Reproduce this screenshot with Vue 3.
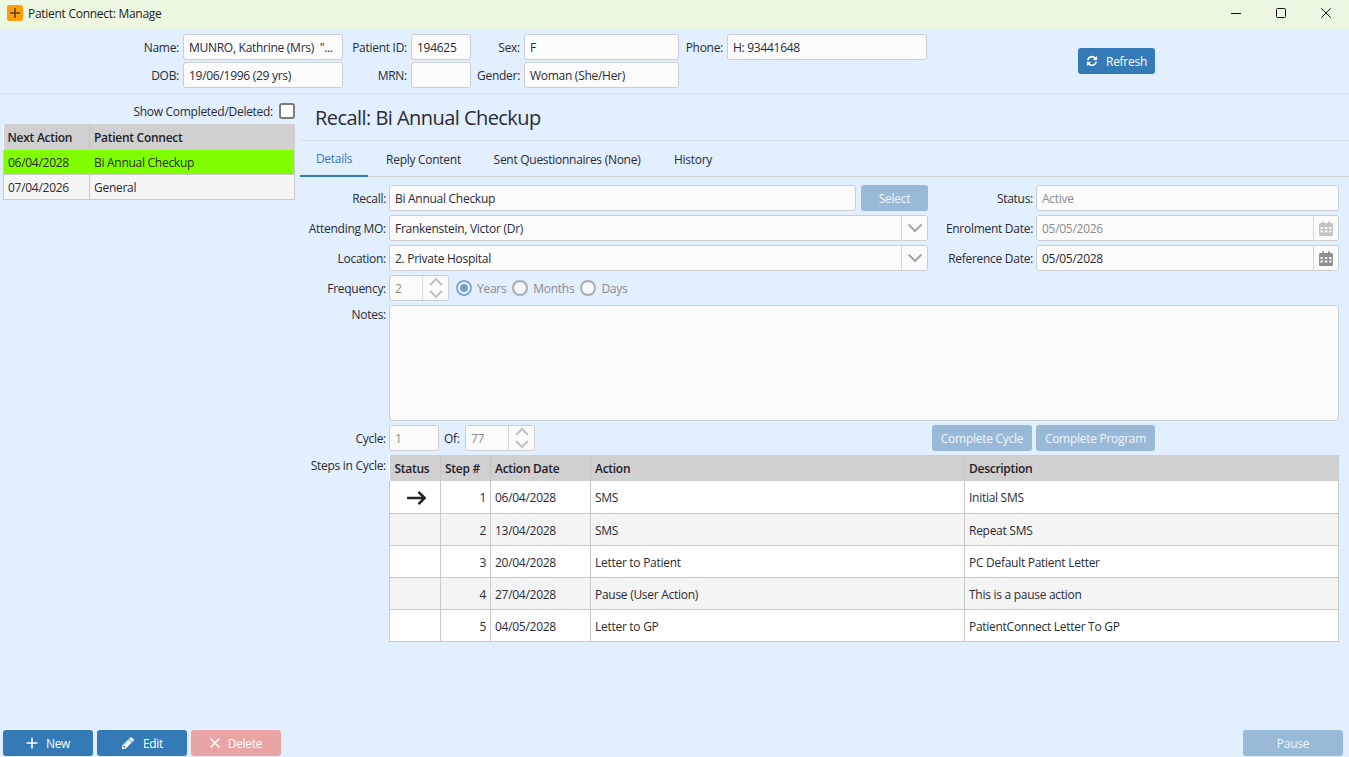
<script setup>
const recalls = [
  { date: '06/04/2028', name: 'Bi Annual Checkup', active: true },
  { date: '07/04/2026', name: 'General', active: false }
]

const steps = [
  { step: 1, date: '06/04/2028', action: 'SMS', description: 'Initial SMS', current: true },
  { step: 2, date: '13/04/2028', action: 'SMS', description: 'Repeat SMS' },
  { step: 3, date: '20/04/2028', action: 'Letter to Patient', description: 'PC Default Patient Letter' },
  { step: 4, date: '27/04/2028', action: 'Pause (User Action)', description: 'This is a pause action' },
  { step: 5, date: '04/05/2028', action: 'Letter to GP', description: 'PatientConnect Letter To GP' }
]

const tabs = [
  { label: 'Details', width: 68 },
  { label: 'Reply Content', width: 111 },
  { label: 'Sent Questionnaires (None)', width: 176 },
  { label: 'History', width: 76 }
]
</script>

<template>
  <div class="app">
    <header class="titlebar">
      <svg class="app-icon" width="16" height="16" viewBox="0 0 16 16">
        <rect width="16" height="16" rx="2.5" fill="#ff9d0a" />
        <path d="M8 3v10M3 8h10" stroke="#5a4520" stroke-width="1.6" />
      </svg>
      <span class="app-title">Patient Connect: Manage</span>
      <div class="win-controls">
        <span class="win-btn">
          <svg width="10" height="10" viewBox="0 0 10 10"><path d="M0 5.5h10" stroke="#111" /></svg>
        </span>
        <span class="win-btn">
          <svg width="10" height="10" viewBox="0 0 10 10"><rect x=".5" y=".5" width="9" height="9" rx="1" fill="none" stroke="#111" /></svg>
        </span>
        <span class="win-btn">
          <svg width="10" height="10" viewBox="0 0 10 10"><path d="M.3.3l9.4 9.4M9.7.3L.3 9.7" stroke="#111" /></svg>
        </span>
      </div>
    </header>

    <section class="patient">
      <label>Name:</label>
      <div class="field">MUNRO, Kathrine (Mrs)&nbsp; "...</div>
      <label>Patient ID:</label>
      <div class="field">194625</div>
      <label>Sex:</label>
      <div class="field">F</div>
      <label>Phone:</label>
      <div class="field">H: 93441648</div>
      <button class="btn refresh">
        <svg width="12" height="12" viewBox="0 0 1792 1792"><path fill="#fff" d="M1639 1056q0 5-1 7-64 268-268 434.5t-478 166.5q-146 0-282.5-55t-243.5-157l-129 129q-19 19-45 19t-45-19-19-45v-448q0-26 19-45t45-19h448q26 0 45 19t19 45-19 45l-137 137q71 66 161 102t187 36q134 0 250-65t186-179q11-17 53-117 8-23 30-23h192q13 0 22.5 9.5t9.5 22.5zm25-800v448q0 26-19 45t-45 19h-448q-26 0-45-19t-19-45 19-45l138-138q-148-137-349-137-134 0-250 65t-186 179q-11 17-53 117-8 23-30 23h-199q-13 0-22.5-9.5t-9.5-22.5v-7q65-268 270-434.5t480-166.5q146 0 284 55.5t245 156.5l130-129q19-19 45-19t45 19 19 45z" /></svg>
        Refresh
      </button>
      <label class="second-row">DOB:</label>
      <div class="field second-row">19/06/1996 (29 yrs)</div>
      <label class="second-row">MRN:</label>
      <div class="field second-row"></div>
      <label class="second-row">Gender:</label>
      <div class="field second-row">Woman (She/Her)</div>
    </section>

    <main class="main">
      <aside class="side">
        <div class="show-row">
          <span>Show Completed/Deleted:</span>
          <span class="checkbox"></span>
        </div>
        <table class="grid recall-list">
          <colgroup><col style="width: 86px" /><col /></colgroup>
          <thead>
            <tr><th>Next Action</th><th>Patient Connect</th></tr>
          </thead>
          <tbody>
            <tr v-for="r in recalls" :key="r.date" :class="{ active: r.active }">
              <td>{{ r.date }}</td>
              <td>{{ r.name }}</td>
            </tr>
          </tbody>
        </table>
      </aside>

      <div class="content">
        <h1 class="heading">Recall: Bi Annual Checkup</h1>
        <nav class="tabs">
          <span
            v-for="(t, i) in tabs"
            :key="t.label"
            class="tab"
            :class="{ selected: i === 0 }"
            :style="{ width: t.width + 'px' }"
          >{{ t.label }}</span>
        </nav>

        <div class="form">
          <label>Recall:</label>
          <div class="recall-row">
            <div class="field grow">Bi Annual Checkup</div>
            <button class="btn off select">Select</button>
          </div>
          <label>Status:</label>
          <div class="field muted">Active</div>

          <label>Attending MO:</label>
          <div class="field addon">
            <span class="grow pad">Frankenstein, Victor (Dr)</span>
            <span class="drop">
              <svg width="16" height="10" viewBox="0 0 16 10"><path d="M1.5 1.5L8 8l6.500-6.500" fill="none" stroke="#a5a5a5" stroke-width="2" /></svg>
            </span>
          </div>
          <label>Enrolment Date:</label>
          <div class="field addon">
            <span class="grow pad muted">05/05/2026</span>
            <span class="cal">
              <svg width="14" height="15" viewBox="0 0 14 15" opacity=".5"><use href="#cal-glyph" /></svg>
            </span>
          </div>

          <label>Location:</label>
          <div class="field addon">
            <span class="grow pad">2. Private Hospital</span>
            <span class="drop">
              <svg width="16" height="10" viewBox="0 0 16 10"><path d="M1.5 1.5L8 8l6.500-6.500" fill="none" stroke="#a5a5a5" stroke-width="2" /></svg>
            </span>
          </div>
          <label>Reference Date:</label>
          <div class="field addon">
            <span class="grow pad">05/05/2028</span>
            <span class="cal">
              <svg width="14" height="15" viewBox="0 0 14 15">
                <g id="cal-glyph" fill="#8f8f8f">
                  <path fill-rule="evenodd" d="M1.500 2H3V.5h2V2h4V.5h2V2h1.500A1.500 1.500 0 0 1 14 3.500V13.500A1.500 1.500 0 0 1 12.500 15h-11A1.500 1.500 0 0 1 0 13.500V3.500A1.500 1.500 0 0 1 1.500 2zM1.500 6v2h2.300V6zm4.300 0v2h2.400V6zm4.400 0v2h2.300V6zM1.500 9.500v2h2.300v-2zm4.300 0v2h2.400v-2zm4.400 0v2h2.300v-2z" />
                </g>
              </svg>
            </span>
          </div>

          <label>Frequency:</label>
          <div class="freq-row">
            <div class="field addon spinner">
              <span class="grow pad muted">2</span>
              <span class="spin">
                <svg width="14" height="22" viewBox="0 0 14 22"><path d="M1 8l6-6 6 6M1 14l6 6 6-6" fill="none" stroke="#c2c2c2" stroke-width="2" /></svg>
              </span>
            </div>
            <span class="radio on"></span><span class="radio-label">Years</span>
            <span class="radio"></span><span class="radio-label">Months</span>
            <span class="radio"></span><span class="radio-label">Days</span>
          </div>
          <span></span><span></span>

          <label class="top notes-label">Notes:</label>
          <div class="field notes"></div>

          <label>Cycle:</label>
          <div class="cycle-row">
            <div class="field muted cycle">1</div>
            <span class="of">Of:</span>
            <div class="field addon of-spinner">
              <span class="grow pad muted">77</span>
              <span class="spin">
                <svg width="14" height="22" viewBox="0 0 14 22"><path d="M1 8l6-6 6 6M1 14l6 6 6-6" fill="none" stroke="#c2c2c2" stroke-width="2" /></svg>
              </span>
            </div>
          </div>
          <div class="cycle-actions">
            <button class="btn off complete-cycle">Complete Cycle</button>
            <button class="btn off complete-program">Complete Program</button>
          </div>

          <label class="top steps-label">Steps in Cycle:</label>
          <table class="grid steps">
            <colgroup>
              <col style="width: 51px" />
              <col style="width: 50px" />
              <col style="width: 100px" />
              <col style="width: 374px" />
              <col />
            </colgroup>
            <thead>
              <tr>
                <th>Status</th><th>Step #</th><th>Action Date</th><th>Action</th><th>Description</th>
              </tr>
            </thead>
            <tbody>
              <tr v-for="s in steps" :key="s.step">
                <td class="status">
                  <svg v-if="s.current" class="arrow" width="19" height="14" viewBox="0 0 19 14"><path d="M0 7h17.500M11.500.9L17.600 7l-6.100 6.100" fill="none" stroke="#26262c" stroke-width="2.600" /></svg>
                </td>
                <td class="num">{{ s.step }}</td>
                <td>{{ s.date }}</td>
                <td>{{ s.action }}</td>
                <td>{{ s.description }}</td>
              </tr>
            </tbody>
          </table>
        </div>
      </div>
    </main>

    <footer class="footer">
      <button class="btn foot">
        <svg width="12" height="12" viewBox="0 0 12 12"><path d="M6 .5v11M.5 6h11" stroke="#fff" stroke-width="1.500" /></svg>
        New
      </button>
      <button class="btn foot">
        <svg width="14" height="14" viewBox="0 0 1792 1792"><path fill="#fff" d="M491 1536l91-91-235-235-91 91v107h128v128h107zm523-928q0-22-22-22-10 0-17 7l-542 542q-7 7-7 17 0 22 22 22 10 0 17-7l542-542q7-7 7-17zm-54-192l416 416-832 832h-416v-416zm683 96q0 53-37 90l-166 166-416-416 166-165q36-38 90-38 53 0 91 38l235 234q37 39 37 91z" /></svg>
        Edit
      </button>
      <button class="btn foot danger">
        <svg width="10" height="10" viewBox="0 0 10 10"><path d="M.5.5l9 9M9.500.5l-9 9" stroke="#fff" stroke-width="1.500" /></svg>
        Delete
      </button>
      <button class="btn off foot pause">Pause</button>
    </footer>
  </div>
</template>

<style scoped>
.app {
  display: flex;
  flex-direction: column;
  height: 100vh;
  background: #e1effe;
  color: #2b2b33;
  font-family: "Open Sans", "Liberation Sans", sans-serif;
  font-size: 12px;
  letter-spacing: -0.28px;
}

.titlebar {
  display: flex;
  align-items: center;
  height: 29px;
  flex: none;
  box-sizing: border-box;
  padding: 0 1px 3px 7px;
  background: #edf8e2;
  color: #1c1c1c;
}

.app-icon {
  margin-right: 5px;
}

.win-controls {
  display: flex;
  margin-left: auto;
}

.win-btn {
  display: flex;
  align-items: center;
  justify-content: center;
  width: 45px;
  height: 26px;
}

.patient {
  display: grid;
  grid-template-columns: 179px 160px 60px 60px 45px 155px 40px 200px 143px 77px;
  grid-template-rows: 26px 26px;
  column-gap: 4px;
  row-gap: 2px;
  align-items: center;
  flex: none;
  height: 65px;
  padding-top: 5px;
  box-sizing: border-box;
  border-bottom: 1px solid #d8e1e9;
}

.second-row {
  grid-row: 2;
}

label {
  text-align: right;
  white-space: nowrap;
}

.top {
  align-self: start;
}

.field {
  display: flex;
  align-items: center;
  height: 26px;
  box-sizing: border-box;
  padding: 0 5px;
  background: #fbfbfb;
  border: 1px solid #cacdd2;
  border-radius: 3px;
  white-space: nowrap;
  overflow: hidden;
}

.muted {
  color: #8b8b8b;
}

.grow {
  flex: 1;
  min-width: 0;
}

.btn {
  display: flex;
  align-items: center;
  justify-content: center;
  height: 26px;
  padding: 0;
  border: none;
  border-radius: 3px;
  background: #337ab7;
  color: #fff;
  font: inherit;
  letter-spacing: inherit;
}

.btn.off {
  background: #98b9d7;
  color: #f2f6fa;
}

.refresh {
  grid-column: 10;
  grid-row: 1 / 3;
  gap: 8px;
  align-self: center;
}

.main {
  display: flex;
  flex: 1;
  min-height: 0;
}

.side {
  flex: none;
  width: 300px;
  padding-top: 9px;
  box-sizing: border-box;
}

.show-row {
  display: flex;
  align-items: center;
  justify-content: flex-end;
  gap: 6px;
  height: 16px;
  padding-right: 5px;
}

.checkbox {
  width: 16px;
  height: 16px;
  box-sizing: border-box;
  background: #fff;
  border: 2px solid #7c7c7c;
  border-radius: 3px;
}

.grid {
  border-collapse: collapse;
  table-layout: fixed;
  background: #fff;
}

.grid th {
  height: 25px;
  padding: 0 4px;
  background: #d0d0d0;
  color: #22222a;
  font-weight: 600;
  text-align: left;
  border-left: 1px solid #c4c4c4;
}

.grid th:first-child {
  border-left: none;
}

.grid td {
  padding: 0 4px;
  border: 1px solid #c9c9c9;
}

.recall-list {
  width: 292px;
  margin: 5px 0 0 3px;
}

.recall-list th {
  height: 26px;
}

.recall-list td {
  height: 24px;
  background: #f5f5f5;
}

.recall-list tr.active td {
  background: #7fff00;
  border-top: none;
}

.content {
  flex: 1;
  min-width: 0;
}

.heading {
  height: 47px;
  box-sizing: border-box;
  margin: 0;
  padding: 10px 0 0 15px;
  font-size: 20px;
  font-weight: 400;
  line-height: 28px;
  letter-spacing: -0.55px;
  border-bottom: 1px solid #d8e1e9;
}

.tabs {
  display: flex;
  height: 36px;
  box-sizing: border-box;
  border-bottom: 1px solid #cdd1d6;
}

.tab {
  display: flex;
  align-items: center;
  justify-content: center;
  height: 36px;
  box-sizing: border-box;
  white-space: nowrap;
}

.tab.selected {
  color: #337ab7;
  border-bottom: 2px solid #337ab7;
}

.form {
  display: grid;
  grid-template-columns: 86px 539px 102px 303px;
  grid-template-rows: 26px 26px 26px 26px 116px 26px 187px;
  column-gap: 3px;
  row-gap: 4px;
  align-items: center;
  padding-top: 8px;
}

.recall-row {
  display: flex;
  gap: 5px;
}

.select {
  width: 67px;
}

.addon {
  padding: 0;
}

.pad {
  padding: 0 5px;
}

.drop,
.cal {
  display: flex;
  align-items: center;
  justify-content: center;
  height: 100%;
  box-sizing: border-box;
  border-left: 1px solid #d5d7da;
}

.drop {
  width: 26px;
}

.cal {
  width: 25px;
}

.freq-row {
  display: flex;
  align-items: center;
}

.spinner {
  width: 60px;
  margin-right: 7px;
}

.spin {
  display: flex;
  align-items: center;
  justify-content: center;
  width: 25px;
  height: 100%;
  flex: none;
  border-left: 1px solid #d5d7da;
}

.radio {
  position: relative;
  width: 16px;
  height: 16px;
  box-sizing: border-box;
  background: #f7f8f9;
  border: 2px solid #a9acb0;
  border-radius: 50%;
}

.radio.on {
  border-color: #7fa9d0;
}

.radio.on::after {
  content: "";
  position: absolute;
  inset: 2px;
  background: #6f9fcb;
  border-radius: 50%;
}

.radio-label {
  margin: 0 6px 0 5px;
  color: #8b8b8b;
}

.notes-label {
  padding-top: 1px;
}

.notes {
  grid-column: 2 / 5;
  height: 116px;
}

.cycle-row {
  display: flex;
  align-items: center;
}

.cycle {
  width: 50px;
}

.of {
  margin: 0 4px 0 5px;
  width: 17px;
}

.of-spinner {
  width: 70px;
}

.cycle-actions {
  grid-column: 3 / 5;
  display: flex;
  gap: 4px;
  margin-left: 1px;
}

.complete-cycle {
  width: 100px;
}

.complete-program {
  width: 119px;
}

.steps-label {
  padding-top: 2px;
}

.steps {
  grid-column: 2 / 5;
  align-self: start;
  width: 950px;
}

.steps thead th {
  height: 26px;
}

.steps thead th:first-child {
  padding-left: 5px;
}

.steps td {
  height: 30px;
  padding-top: 1px;
  background: #fff;
}

.steps tbody tr:first-child td {
  height: 32px;
  padding-top: 0;
  border-top: none;
}

.steps tbody tr:nth-child(even) td {
  background: #f4f4f4;
}

.status {
  text-align: center;
}

.arrow {
  display: block;
  margin: 1px auto 0;
  transform: translateX(1px);
}

.num {
  text-align: right;
}

.footer {
  display: flex;
  flex: none;
  gap: 4px;
  padding: 0 6px 1px 3px;
}

.foot {
  width: 90px;
  gap: 8px;
}

.danger {
  background: #e9a5a5;
}

.pause {
  width: 100px;
  margin-left: auto;
}
</style>

<style>
html,
body {
  margin: 0;
  overflow: hidden;
}
</style>
